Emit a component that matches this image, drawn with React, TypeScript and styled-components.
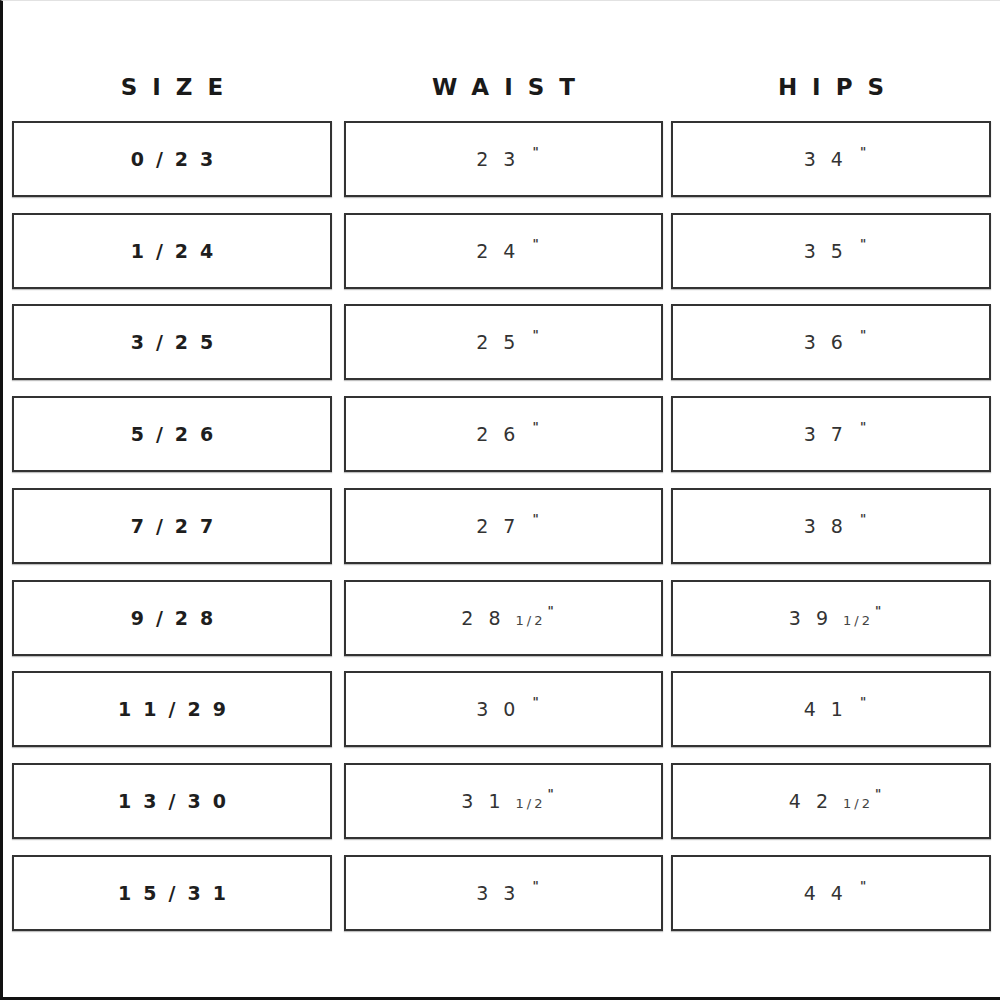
import React from "react";
import styled, { createGlobalStyle } from "styled-components";

const Global = createGlobalStyle`
  html, body { margin: 0; padding: 0; background: #fff; }
  body { font-family: "DejaVu Sans", sans-serif; }
`;

const Page = styled.div`
  box-sizing: border-box;
  width: 1000px;
  height: 1000px;
  background: #fff;
  border-left: 3px solid #111;
  border-bottom: 3px solid #111;
  border-top: 1px solid #e2e2e2;
  padding: 68px 0 0 9px;
`;

const Table = styled.div`
  display: grid;
  grid-template-columns: 320px 12px 319px 8px 320px;
  grid-template-rows: 36px;
  grid-auto-rows: 76px;
  row-gap: 15.75px;
`;

const Head = styled.div<{ $col: number }>`
  grid-column: ${(p) => p.$col};
  display: flex;
  align-items: center;
  justify-content: center;
  font-family: "DejaVu Sans", sans-serif;
  font-weight: 700;
  font-size: 23px;
  letter-spacing: 15px;
  padding-left: 15px;
  color: #1a1a1a;
`;

const Cell = styled.div<{ $col: number }>`
  grid-column: ${(p) => p.$col};
  box-sizing: border-box;
  border: 2px solid #333;
  box-shadow: 0 1px 1px rgba(0, 0, 0, 0.25);
  display: flex;
  align-items: center;
  justify-content: center;
  font-family: "DejaVu Sans", sans-serif;
  color: #2a2a2a;
`;

const SizeText = styled.span`
  font-weight: 700;
  font-size: 19px;
  letter-spacing: 12px;
  padding-left: 12px;
  color: #1e1e1e;
`;

const ValueText = styled.span`
  display: inline-flex;
  align-items: baseline;
  padding-left: 8px;
`;

const Main = styled.span`
  font-size: 19px;
  letter-spacing: 15px;
  color: #333;
`;

const Frac = styled.span`
  font-size: 13px;
  letter-spacing: 3px;
  color: #444;
`;

const Inch = styled.span`
  font-size: 12px;
  font-weight: 700;
  color: #3a3a3a;
  align-self: flex-start;
  line-height: 1;
  margin-left: 2px;
  margin-top: -2px;
`;

type Row = { size: string; waist: [string, boolean]; hips: [string, boolean] };

const rows: Row[] = [
  { size: "0/23", waist: ["23", false], hips: ["34", false] },
  { size: "1/24", waist: ["24", false], hips: ["35", false] },
  { size: "3/25", waist: ["25", false], hips: ["36", false] },
  { size: "5/26", waist: ["26", false], hips: ["37", false] },
  { size: "7/27", waist: ["27", false], hips: ["38", false] },
  { size: "9/28", waist: ["28", true], hips: ["39", true] },
  { size: "11/29", waist: ["30", false], hips: ["41", false] },
  { size: "13/30", waist: ["31", true], hips: ["42", true] },
  { size: "15/31", waist: ["33", false], hips: ["44", false] },
];

const Value: React.FC<{ v: [string, boolean]; col: number }> = ({ v, col }) => (
  <Cell $col={col}>
    <ValueText>
      <Main>{v[0]}</Main>
      {v[1] && <Frac>1/2</Frac>}
      <Inch>"</Inch>
    </ValueText>
  </Cell>
);

export default function App() {
  return (
    <>
      <Global />
      <Page>
        <Table>
          <Head $col={1}>SIZE</Head>
          <Head $col={3}>WAIST</Head>
          <Head $col={5}>HIPS</Head>
          {rows.map((r) => (
            <React.Fragment key={r.size}>
              <Cell $col={1}>
                <SizeText>{r.size}</SizeText>
              </Cell>
              <Value v={r.waist} col={3} />
              <Value v={r.hips} col={5} />
            </React.Fragment>
          ))}
        </Table>
      </Page>
    </>
  );
}
